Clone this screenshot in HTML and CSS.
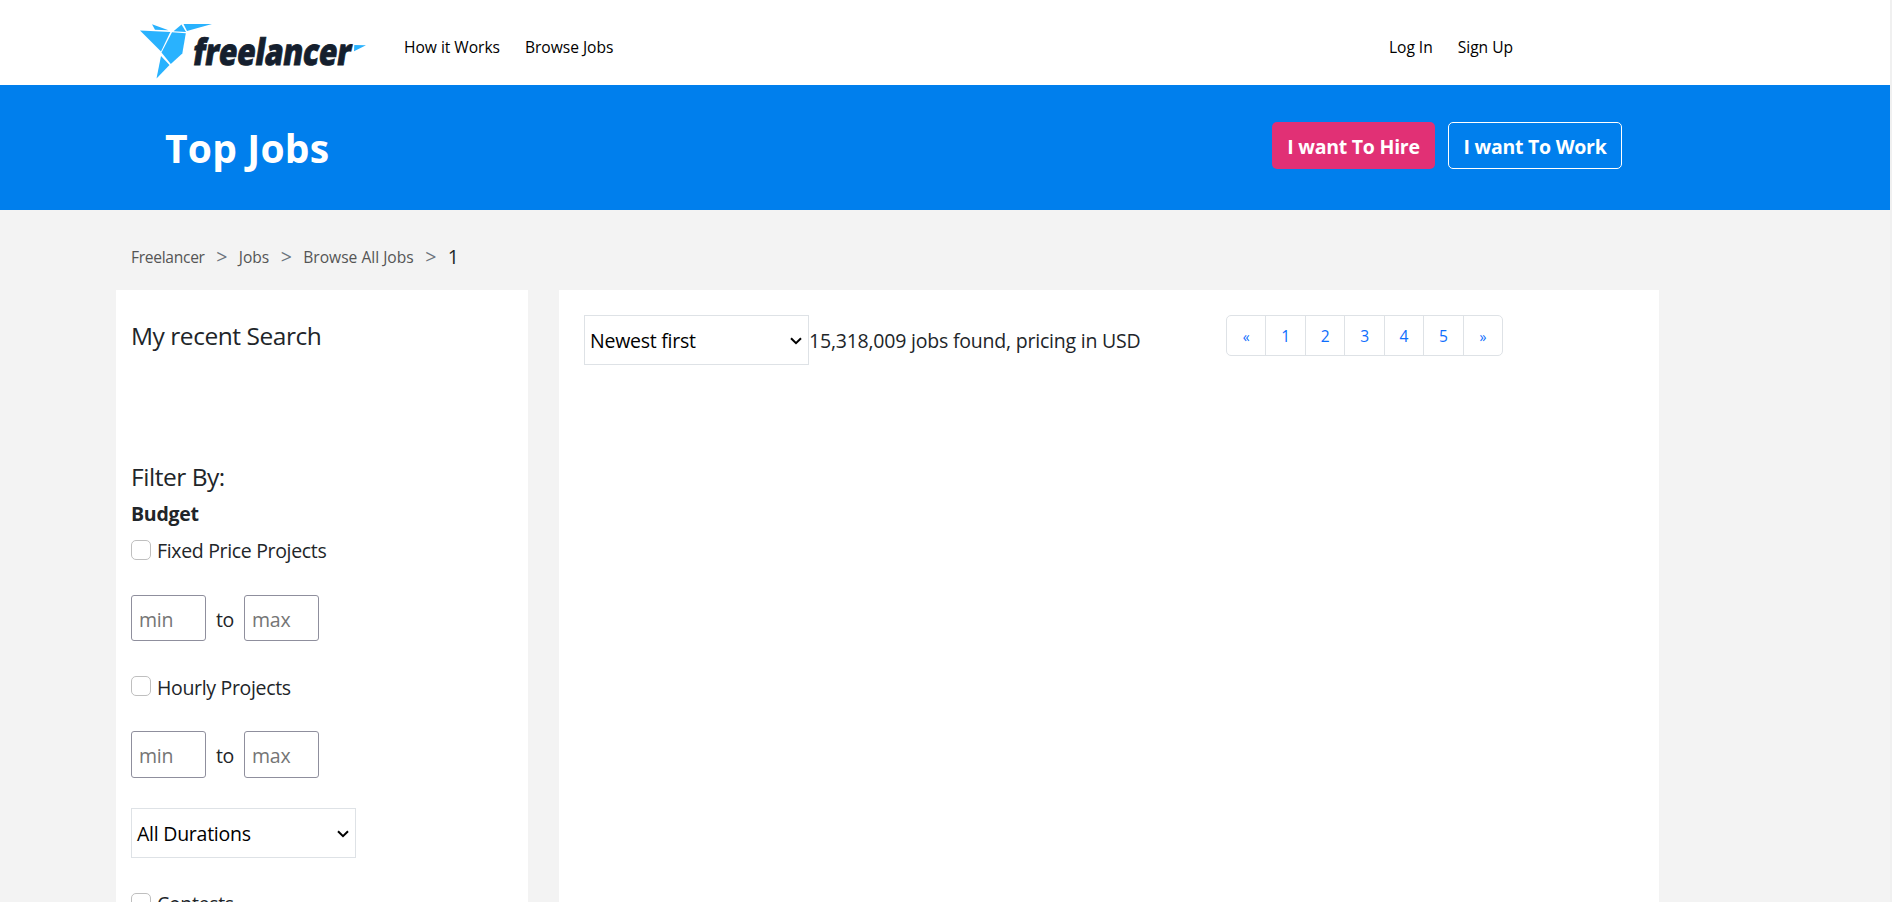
FILE: index.html
```html
<!DOCTYPE html>
<html lang="en">
<head>
<meta charset="utf-8">
<title>Top Jobs | Freelancer</title>
<link rel="stylesheet" href="styles.css">
</head>
<body>
<div class="page">
  <header class="header">
    <a class="logo" aria-label="freelancer">
      <svg width="230" height="60" viewBox="138 20 230 60">
        <g fill="#29b2fe">
          <path d="M140 30.500L170.300 32L161 51.500Z"/>
          <path d="M152 24.300L168.500 30.200L155 29.800Z"/>
          <path d="M172 32.300L185.800 33.300L182.300 53.500L170.800 64L161.500 52.500Z"/>
          <path d="M181.500 24.500L186 32L173.500 31.300Z"/>
          <path d="M183.500 24L212 24L187 31Z"/>
          <path d="M161 56L169.500 65L156.500 78.500Z"/>
          <path d="M354.300 45L366 45.200L354 51.300Z"/>
        </g>
        <text class="wordmark" transform="translate(191.500 65.200) skewX(-9)" textLength="158" lengthAdjust="spacingAndGlyphs">freelancer</text>
      </svg>
    </a>
    <nav class="nav">
      <a class="nav-link">How it Works</a>
      <a class="nav-link">Browse Jobs</a>
    </nav>
    <nav class="account">
      <a class="nav-link">Log In</a>
      <a class="nav-link">Sign Up</a>
    </nav>
  </header>

  <section class="hero">
    <h1 class="hero-title">Top Jobs</h1>
    <div class="hero-actions">
      <button class="btn btn-hire">I want To Hire</button>
      <button class="btn btn-work">I want To Work</button>
    </div>
  </section>

  <div class="breadcrumb">
    <a class="home">Freelancer</a><span class="sep">&gt;</span><a>Jobs</a><span class="sep">&gt;</span><a>Browse All Jobs</a><span class="sep">&gt;</span><span class="current">1</span>
  </div>

  <main class="columns">
    <aside class="filters">
      <h2 class="heading">My recent Search</h2>
      <h2 class="heading filter">Filter By:</h2>
      <h3 class="budget">Budget</h3>
      <label class="check"><i class="box"></i><span>Fixed Price Projects</span></label>
      <div class="range"><div class="field">min</div><span class="to">to</span><div class="field">max</div></div>
      <label class="check hourly"><i class="box"></i><span>Hourly Projects</span></label>
      <div class="range tall"><div class="field">min</div><span class="to">to</span><div class="field">max</div></div>
      <div class="select durations"><span>All Durations</span><svg width="12" height="8" viewBox="0 0 12 8"><path d="M1 1.200L6 6.200L11 1.200"/></svg></div>
      <label class="check contests"><i class="box"></i><span>Contests</span></label>
    </aside>
    <section class="results">
      <div class="select"><span>Newest first</span><svg width="12" height="8" viewBox="0 0 12 8"><path d="M1 1.200L6 6.200L11 1.200"/></svg></div>
      <p class="count">15,318,009 jobs found, pricing in USD</p>
      <ul class="pagination">
        <li class="arrow">«</li><li>1</li><li>2</li><li>3</li><li>4</li><li>5</li><li class="arrow">»</li>
      </ul>
    </section>
  </main>
</div>
</body>
</html>
```
FILE: styles.css
```css
* { box-sizing: border-box; }
body {
  margin: 0;
  height: 902px;
  overflow: hidden;
  background: #f0f0f0;
  color: #212529;
  font-family: "Open Sans", sans-serif;
  font-size: 19.5px;
}
h1, h2, h3, p, ul { margin: 0; padding: 0; font-weight: 400; }
.page { width: 1890px; height: 902px; overflow: hidden; background: #f3f3f3; }

.header { display: flex; height: 85px; padding-left: 138px; background: #fff; }
.logo { width: 230px; padding-top: 20px; }
.logo svg { display: block; overflow: visible; }
.wordmark { font: 800 36.5px "Open Sans", sans-serif; fill: #151f2e; stroke: #151f2e; stroke-width: 0.9; }
.nav, .account { display: flex; gap: 25px; padding-top: 35px; }
.nav { margin-left: 36px; }
.account { margin-left: auto; margin-right: 377px; }
.nav-link { font-size: 15.6px; line-height: 24px; color: #000; white-space: nowrap; letter-spacing: -0.03px; }

.hero { display: flex; justify-content: space-between; height: 125px; padding: 37px 268px 0 165px; background: #007fed; color: #fff; }
.hero-title { font-size: 39px; font-weight: 700; line-height: 52px; letter-spacing: 0.2px; }
.hero-actions { display: flex; gap: 13px; }
.btn { height: 47px; padding: 2px 0 0; border: 1px solid transparent; border-radius: 5px; color: #fff; font: 700 19.5px/43px "Open Sans", sans-serif; letter-spacing: -0.25px; }
.btn-hire { width: 163px; background: #e13075; }
.btn-work { width: 174px; background: none; border-color: #fff; }

.breadcrumb { display: flex; height: 80px; padding: 32px 0 0 131px; line-height: 30px; color: #6c757d; }
.breadcrumb a { font-size: 15.6px; color: #555; }
.breadcrumb .home { letter-spacing: -0.3px; }
.sep { width: 34px; text-align: center; }
.current { color: #212529; }

.columns { display: flex; gap: 31px; padding-left: 116px; letter-spacing: -0.25px; }
.filters { width: 412px; height: 612px; padding: 31px 15px 0; background: #fff; overflow: hidden; }
.results { display: flex; width: 1100px; height: 612px; padding: 25px; background: #fff; }
.heading { font-size: 24.5px; line-height: 30px; letter-spacing: -0.46px; }
.filter { margin-top: 111px; }
.budget { margin-top: 7px; font-size: 19.5px; font-weight: 700; line-height: 30px; }
.check { display: flex; gap: 6px; line-height: 30px; margin-top: 7px; letter-spacing: -0.33px; }
.box { width: 20px; height: 20px; margin-top: 4px; border: 1px solid #bfbfbf; border-radius: 5px; }
.range { display: flex; margin-top: 29px; height: 46px; line-height: 50px; }
.field { width: 75px; padding-left: 7px; border: 1px solid #8f8f9d; border-radius: 3px; color: #757575; line-height: 48px; }
.to { width: 38px; text-align: center; }
.tall { height: 47px; margin-top: 28px; }
.hourly { margin-top: 31px; }
.hourly span { padding-top: 1px; }
.select { display: flex; justify-content: space-between; width: 225px; height: 50px; padding: 0 6px 0 5px; border: 1px solid #dee2e6; color: #000; line-height: 50px; }
.select svg { margin-top: 21px; fill: none; stroke: #000; stroke-width: 2; }
.durations { margin-top: 30px; }
.contests { margin-top: 31px; }
.count { width: 332px; line-height: 52px; white-space: nowrap; letter-spacing: -0.21px; }
.pagination { display: flex; width: 277px; height: 41px; margin-left: 85px; border: 1px solid #dee2e6; border-radius: 5px; list-style: none; }
.pagination li { flex: 1; border-left: 1px solid #dee2e6; color: #0d6efd; font-size: 15.6px; line-height: 41px; text-align: center; }
.pagination li:first-child { border-left: 0; }
.pagination .arrow { font-size: 14px; }
```
